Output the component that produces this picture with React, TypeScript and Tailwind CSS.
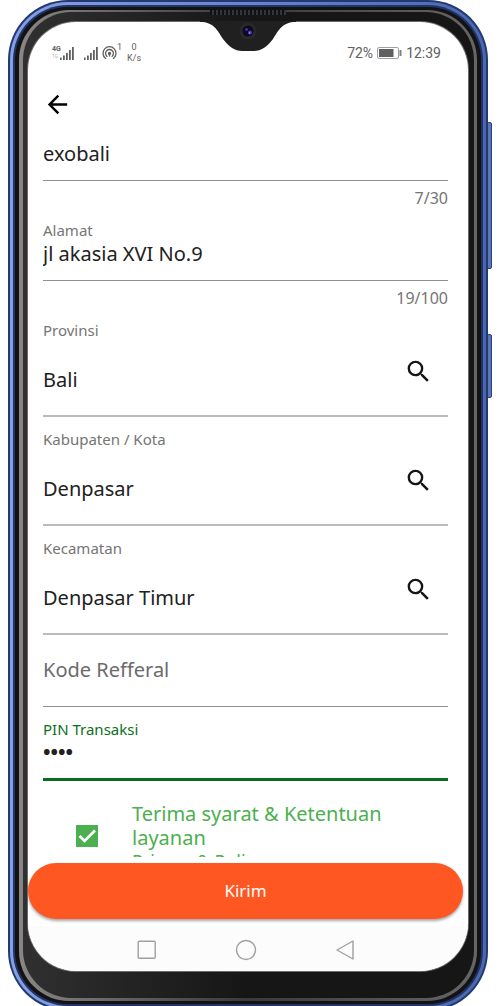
import React, { useState } from "react";
import { MdArrowBack, MdSearch } from "react-icons/md";

const valueText = "font-['Noto_Sans',sans-serif] text-[20px] text-[#212121]";
const labelText = "block h-5 text-[15px] leading-5";

function TextField({ id, label, initial, max }: { id: string; label?: string; initial: string; max: number }) {
  const [value, setValue] = useState(initial);
  return (
    <div>
      {label && (
        <div className="pt-3">
          <label htmlFor={id} className={`${labelText} text-[#757575]`}>{label}</label>
        </div>
      )}
      <input
        id={id}
        aria-label={label ?? "Nama"}
        value={value}
        maxLength={max}
        onChange={(e) => setValue(e.target.value)}
        className={`${valueText} block w-full border-b border-[#909090] bg-transparent outline-none ${label ? "h-[41px] pb-[14px]" : "h-[53px] pb-[2px]"}`}
      />
      <p className="pt-[7px] text-right text-[16px] leading-5 text-[#757575]">{value.length}/{max}</p>
    </div>
  );
}

function SearchField({ id, label, value }: { id: string; label: string; value: string }) {
  return (
    <div className="pt-3">
      <label htmlFor={id} className={`${labelText} text-[#757575]`}>{label}</label>
      <div className="flex h-[77px] items-start border-b-2 border-[#bbbbbb]">
        <input id={id} readOnly value={value} className={`${valueText} h-full min-w-0 flex-1 bg-transparent pt-1 outline-none`} />
        <button type="button" aria-label={`Cari ${label}`} className="mr-[15px] mt-[17px] text-[#151515]">
          <MdSearch size={29} />
        </button>
      </div>
    </div>
  );
}

function Signal() {
  return (
    <svg width="14" height="13" viewBox="0 0 14 13" fill="#606060">
      <rect x="0" y="10.5" width="1.6" height="2.5" />
      <rect x="3" y="8.5" width="1.8" height="4.5" />
      <rect x="6" y="6" width="1.8" height="7" />
      <rect x="9" y="3" width="1.8" height="10" />
      <rect x="12" y="0" width="1.8" height="13" />
    </svg>
  );
}

function StatusBar() {
  return (
    <header className="flex h-[58px] items-center justify-between pl-6 pr-[27px] pt-1 font-[Roboto,sans-serif] text-[#606060]">
      <div className="flex items-center">
        <div className="flex items-end">
          <div className="flex h-[14px] w-[8px] flex-col text-[7px] font-bold leading-[7px]">
            <span>4G</span>
            <span className="text-[5px] font-normal text-[#b5b5b5]">1G</span>
          </div>
          <Signal />
        </div>
        <div className="ml-[10px]"><Signal /></div>
        <svg className="ml-1" width="15" height="14" viewBox="0 0 15 14" fill="none" stroke="#606060" strokeWidth="1.3" strokeLinecap="round">
          <path d="M3.6 12.4A6.5 6.5 0 1 1 11.4 12.4" />
          <path d="M5 10.4A3.9 3.9 0 1 1 10 10.4" />
          <circle cx="7.5" cy="7.4" r="1" fill="#606060" />
          <path d="M7.5 8v2" />
        </svg>
        <span className="-mt-3 text-[9px] leading-none">1</span>
        <div className="ml-[5px] flex flex-col items-center text-[9px] leading-[11px]">
          <span>0</span>
          <span>K/s</span>
        </div>
      </div>
      <div className="flex items-center text-[14px]">
        <span>72%</span>
        <svg className="mx-1" width="25" height="12" viewBox="0 0 25 12">
          <rect x="0.5" y="0.5" width="21" height="11" rx="1.5" fill="#fff" stroke="#a0a0a0" />
          <rect x="2" y="2" width="14.5" height="8" fill="#606060" />
          <rect x="22.5" y="3" width="2" height="6" fill="#808080" />
        </svg>
        <span>12:39</span>
      </div>
    </header>
  );
}

function Notch() {
  return (
    <svg className="absolute left-1/2 top-[-1px] -translate-x-1/2" width="96" height="31" viewBox="0 0 96 31">
      <path d="M0 0H96V1C82 1 79 9 73 18C67 26 61 30 54 30H42C35 30 29 26 23 18C17 9 14 1 0 1Z" fill="#202020" />
      <circle cx="48" cy="10" r="8.5" fill="#29292b" />
      <circle cx="48" cy="10" r="5.5" fill="#0c0a1c" />
      <circle cx="46.5" cy="8.5" r="1.3" fill="#4a3fc0" />
      <circle cx="50" cy="11.5" r="2" fill="#4b35d8" />
      <circle cx="49.5" cy="12" r="0.8" fill="#a99bff" />
    </svg>
  );
}

function Terms() {
  const [checked, setChecked] = useState(true);
  return (
    <div className="flex h-[76px] overflow-hidden pl-12 pt-[21px] text-[#4caf50]">
      <div className="relative mt-[23px] h-[22px] w-[22px] shrink-0">
        <input
          id="terms"
          type="checkbox"
          checked={checked}
          onChange={(e) => setChecked(e.target.checked)}
          className="peer block h-[22px] w-[22px] appearance-none border-2 border-[#4caf50] checked:bg-[#4caf50]"
        />
        <svg className="pointer-events-none absolute inset-0 hidden peer-checked:block" width="22" height="22" viewBox="0 0 22 22" fill="none" stroke="#fff" strokeWidth="2.6">
          <path d="M3.5 11L8.5 16L19 5.5" />
        </svg>
      </div>
      <label htmlFor="terms" className="ml-[34px] w-[270px] text-[20px] leading-6">
        Terima syarat &amp; Ketentuan layanan
        <span className="block text-[18px] leading-[22px]">Privacy &amp; Policy</span>
      </label>
    </div>
  );
}

function NavBar() {
  return (
    <nav className="mt-[7px] flex h-[45px] items-center justify-center gap-[78px] bg-[#fcfcfc] pr-1 pt-[2px]">
      <button type="button" aria-label="Aplikasi terbaru">
        <svg width="20" height="20" viewBox="0 0 20 20" fill="none" stroke="#a0a0a0" strokeWidth="1.4"><rect x="1.2" y="1.2" width="17" height="17" rx="1" /></svg>
      </button>
      <button type="button" aria-label="Beranda">
        <svg width="22" height="22" viewBox="0 0 22 22" fill="none" stroke="#a0a0a0" strokeWidth="1.4"><circle cx="11" cy="11" r="9.5" /></svg>
      </button>
      <button type="button" aria-label="Kembali">
        <svg width="20" height="20" viewBox="0 0 20 20" fill="none" stroke="#a0a0a0" strokeWidth="1.4" strokeLinejoin="round"><path d="M2 10L18 1V19Z" /></svg>
      </button>
    </nav>
  );
}

export default function App() {
  const [pin, setPin] = useState("1234");
  return (
    <main className="min-h-screen overflow-hidden bg-white font-['Noto_Sans',sans-serif]">
      <div className="relative -mb-[5px] ml-2 mr-3">
        <div className="absolute -right-[4px] top-[122px] h-[147px] w-2 rounded-[2px] border border-[#2a4282] bg-[#5b76b5]" />
        <div className="absolute -right-[4px] top-[334px] h-[64px] w-2 rounded-[2px] border border-[#2a4282] bg-[#5b76b5]" />
        <div className="relative rounded-[60px] bg-[#233974] p-[2px]">
          <div className="rounded-[58px] bg-linear-to-r from-[#86a0e2] to-[#4c68ad] p-[3px]">
            <div className="rounded-[55px] bg-[#20336b] p-[2px]">
              <div className="relative rounded-[53px] bg-[#131313] px-1 py-[3px]">
                <div className="absolute left-1/2 top-[3px] z-10 h-[5px] w-[76px] -translate-x-1/2 bg-[repeating-linear-gradient(90deg,#111_0_2px,#34343c_2px_4px)]" />
                <div className="rounded-[50px] bg-linear-to-r from-[#8a8686] via-[#3a3a3a] to-[#666666] pb-[3px] pl-1 pr-[3px] pt-[2px]">
                  <div className="rounded-[48px] bg-linear-to-r from-[#303030] via-[#161616] to-[#161616] pb-[27px] pl-[5px] pr-[6px] pt-[10px]">
                    <div className="relative rounded-[48px] bg-white ring-1 ring-[#6b6b6b]">
                      <Notch />
                      <div className="overflow-hidden rounded-[48px]">
                        <StatusBar />
                        <form onSubmit={(e) => e.preventDefault()}>
                          <div className="pl-[15px] pr-5">
                            <div className="flex h-12 items-center">
                              <button type="button" aria-label="Kembali ke halaman sebelumnya" className="text-black">
                                <MdArrowBack size={29} />
                              </button>
                            </div>
                            <TextField id="nama" initial="exobali" max={30} />
                            <TextField id="alamat" label="Alamat" initial="jl akasia XVI No.9 " max={100} />
                            <SearchField id="provinsi" label="Provinsi" value="Bali" />
                            <SearchField id="kota" label="Kabupaten / Kota" value="Denpasar" />
                            <SearchField id="kecamatan" label="Kecamatan" value="Denpasar Timur" />
                            <input
                              aria-label="Kode Refferal"
                              placeholder="Kode Refferal"
                              className={`${valueText} block h-[72px] w-full border-b border-[#909090] bg-transparent pb-[2px] outline-none placeholder:text-[#6b6b6b]`}
                            />
                            <div className="pt-3">
                              <label htmlFor="pin" className={`${labelText} text-[#0b7020]`}>PIN Transaksi</label>
                              <input
                                id="pin"
                                type="password"
                                value={pin}
                                onChange={(e) => setPin(e.target.value)}
                                className={`${valueText} block h-[42px] w-full border-b-[3px] border-[#0b6b20] bg-transparent pb-[15px] font-bold outline-none`}
                              />
                            </div>
                          </div>
                          <Terms />
                          <div className="pr-[5px] pt-[6px]">
                            <button type="submit" className="h-14 w-full rounded-full bg-[#ff5722] text-[17px] text-white shadow-[0_2px_3px_rgba(0,0,0,0.35)]">
                              Kirim
                            </button>
                          </div>
                        </form>
                        <NavBar />
                      </div>
                    </div>
                  </div>
                </div>
              </div>
            </div>
          </div>
        </div>
      </div>
    </main>
  );
}
